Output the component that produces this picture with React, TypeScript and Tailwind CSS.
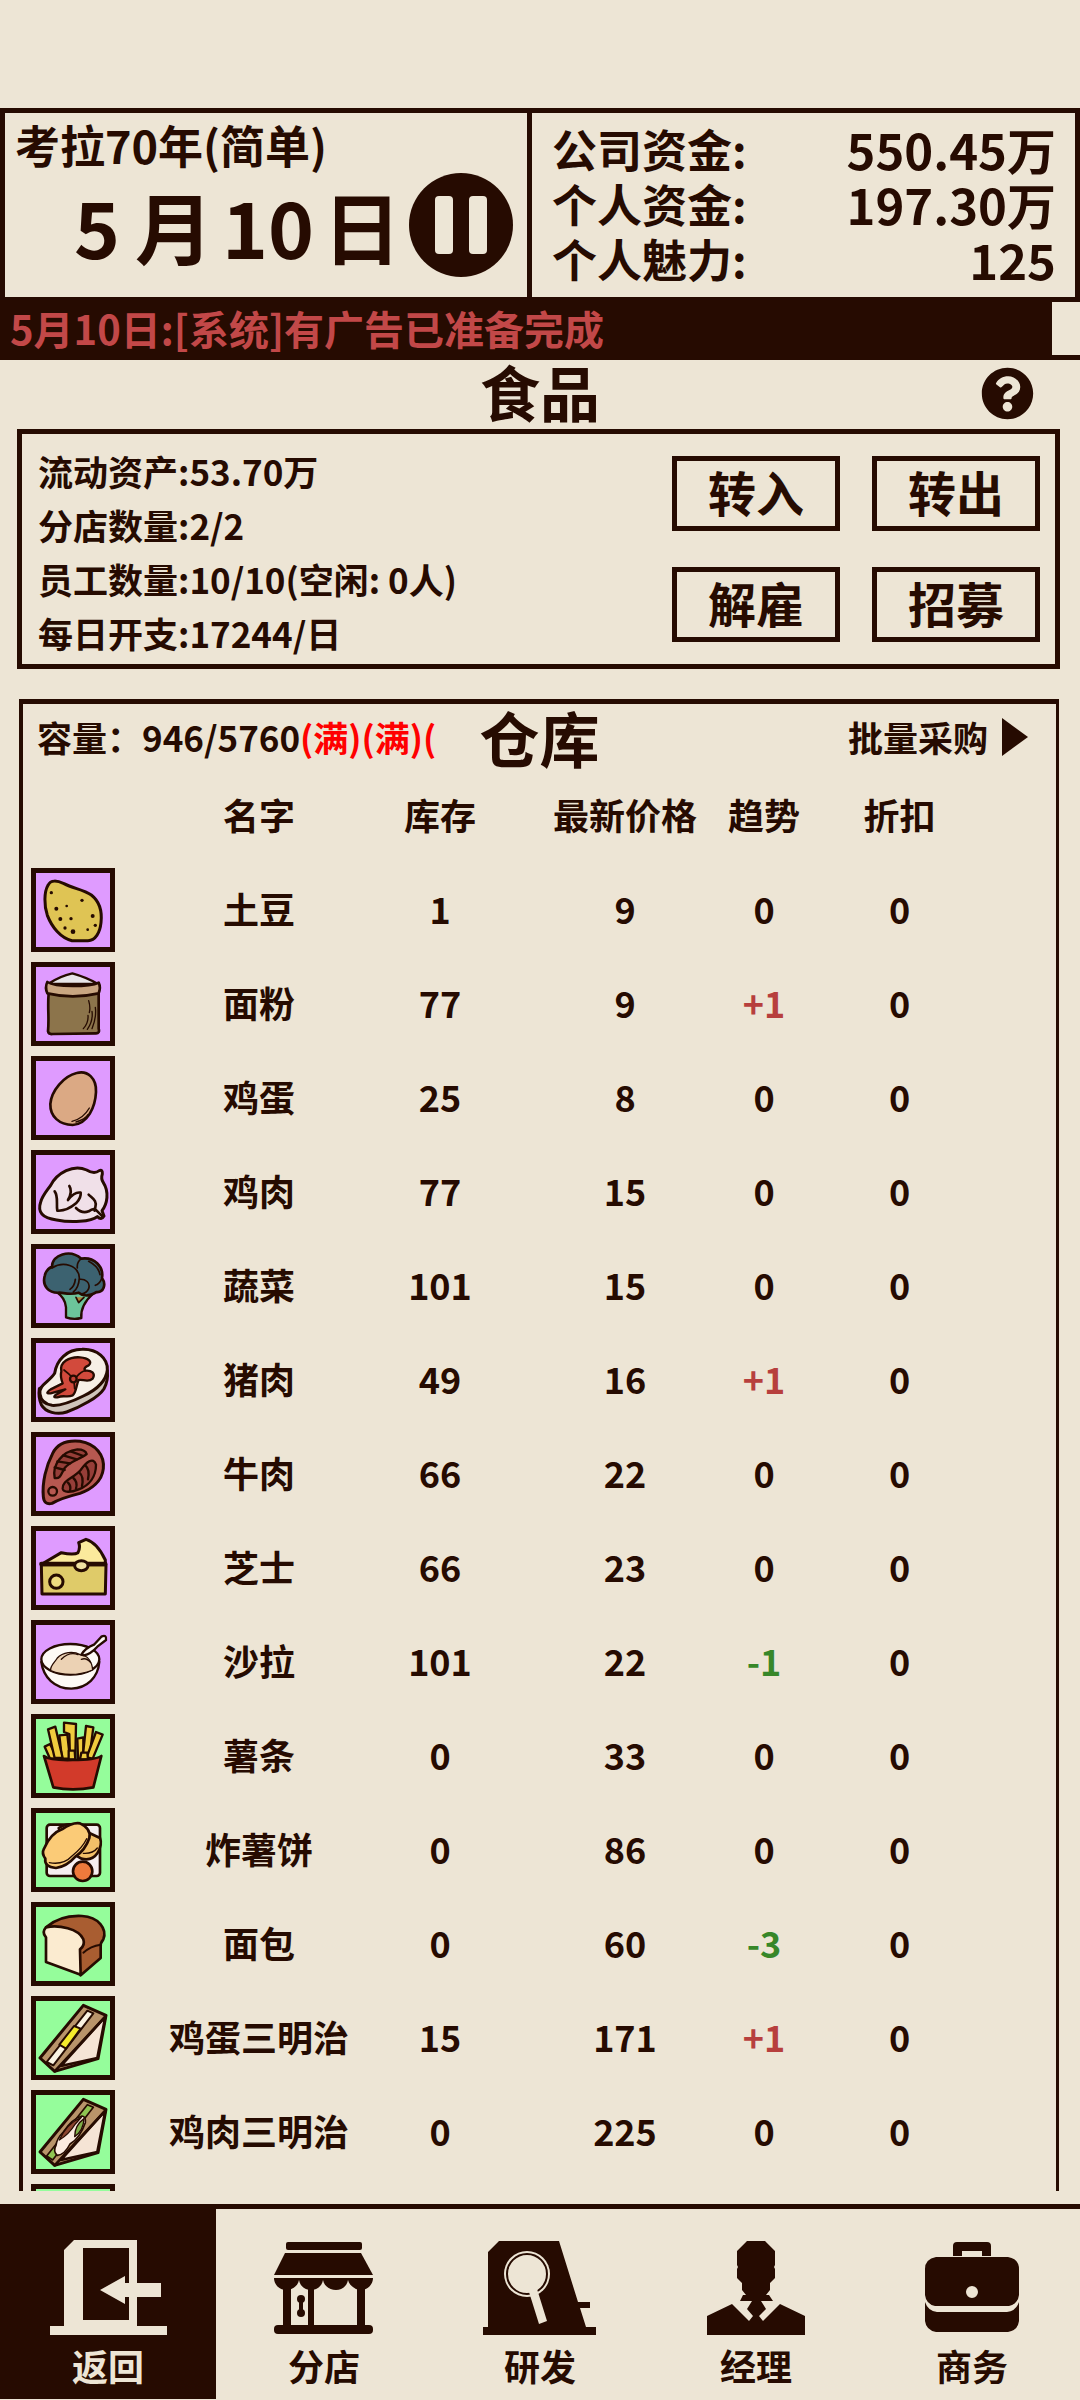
import type { ReactNode } from "react";
import { FaQuestionCircle } from "react-icons/fa";

interface Goods {
  name: string;
  stock?: number;
  price?: number;
  trend?: number;
  discount?: number;
  cooked?: boolean;
  art?: ReactNode;
}

const INK = "#260b01";

const potato = (
  <>
    <path
      d="M84 76C92 58 112 62 132 71C160 86 190 88 214 105C238 124 247 152 243 188C240 218 226 242 204 242L156 242C122 234 96 202 82 166C72 138 72 96 84 76Z"
      fill="#dfc454"
      strokeWidth="9"
    />
    <g fill={INK} stroke="none">
      <circle cx="94" cy="98" r="5" />
      <circle cx="186" cy="121" r="5" />
      <circle cx="140" cy="138" r="4" />
      <circle cx="109" cy="146" r="6" />
      <circle cx="121" cy="177" r="6" />
      <circle cx="153" cy="176" r="5" />
      <circle cx="218" cy="168" r="6" />
      <circle cx="226" cy="196" r="5" />
      <circle cx="135" cy="204" r="5" />
      <circle cx="159" cy="215" r="7" />
      <circle cx="203" cy="209" r="4" />
    </g>
  </>
);

const flour = (
  <>
    <path
      d="M86 118C82 160 88 190 84 232Q86 242 98 240L228 238Q240 238 236 224L236 118Z"
      fill="#8c744b"
      strokeWidth="8"
    />
    <path d="M84 90Q120 66 157 58Q200 70 234 90Z" fill="#e8e6e8" strokeWidth="7" />
    <path
      d="M82 84Q74 100 82 118Q158 136 236 118Q243 100 236 86Q214 96 158 96Q100 96 82 84Z"
      fill="#c9a681"
      strokeWidth="8"
    />
    <path
      d="M190 224Q206 206 204 184M202 226Q220 200 216 172M216 224Q230 190 226 160M206 140Q212 160 208 176"
      fill="none"
      strokeWidth="4"
    />
  </>
);

const egg = (
  <>
    <path
      d="M170 75C204 66 230 92 228 132C226 176 204 228 158 231C118 230 90 206 91 168C94 128 132 84 170 75Z"
      fill="#dba984"
      strokeWidth="8"
    />
    <path d="M156 220Q190 212 208 180M168 222Q196 214 204 200" fill="none" strokeWidth="4" />
  </>
);

const chicken = (
  <>
    <path
      d="M92 130C112 92 160 66 200 84C216 94 230 92 238 86Q248 82 247 96Q242 110 250 122C268 150 262 186 246 206L252 222Q244 236 232 224C214 240 150 242 110 234C66 228 52 210 62 180C68 160 78 150 92 130Z"
      fill="#f0e0e8"
      strokeWidth="9"
    />
    <path
      d="M104 148C116 164 108 186 112 206Q140 208 168 184M148 132C156 144 152 160 144 174Q164 148 182 152Q184 168 168 184M206 158C218 170 232 176 226 196L224 206M168 198Q186 216 206 208Q222 196 230 206L248 224"
      fill="none"
      strokeWidth="8"
    />
  </>
);

const broccoli = (
  <>
    <path
      d="M110 168Q136 186 138 214L138 244Q160 252 184 246Q180 208 222 170Z"
      fill="#6cc49a"
      strokeWidth="7"
    />
    <path
      d="M96 92C96 56 150 38 184 68C222 62 252 92 246 126C260 146 250 170 230 168C210 180 190 182 176 170C150 178 130 170 118 170C86 172 66 150 74 120C78 102 86 96 96 92Z"
      fill="#3c6270"
      strokeWidth="8"
    />
    <path
      d="M96 96C130 74 176 88 178 126Q176 156 160 168M184 68Q170 78 172 96M178 130C196 128 212 140 206 158Q200 172 184 174M206 76Q236 92 240 116M166 130Q164 150 150 160M244 130Q238 144 226 148"
      fill="none"
      strokeWidth="5"
    />
    <path d="M168 184L176 200L192 184" fill="#b0843a" strokeWidth="5" />
  </>
);

const steak = (
  <>
    <path
      d="M58 176C56 190 58 210 64 224C76 246 110 256 140 246C180 232 236 202 252 176C262 158 264 140 262 122L200 100Z"
      fill="#cfc4ba"
      strokeWidth="9"
    />
    <path
      d="M60 192C56 164 88 156 104 130C110 90 140 58 186 58C232 56 264 86 262 120C258 156 224 182 190 198C154 216 124 228 96 226C72 222 62 210 60 192Z"
      fill="#f7efe6"
      strokeWidth="9"
    />
    <path
      d="M124 124C118 96 148 80 180 82C206 84 218 96 206 106C196 110 190 116 196 122C214 120 228 130 218 146C204 160 186 146 176 150C168 166 170 186 158 196C140 204 134 194 112 202Q96 204 108 194L136 178Q112 184 92 190Q72 192 92 178L128 160Q120 140 124 124Z"
      fill="#d24a3c"
      strokeWidth="7"
    />
    <path d="M132 120Q148 132 156 142M170 140Q184 124 196 122M162 154L164 176" fill="none" strokeWidth="5" />
    <circle cx="160" cy="147" r="10" fill="#c44236" strokeWidth="7" />
  </>
);

const beef = (
  <>
    <path
      d="M98 88C112 60 140 48 180 52C228 60 254 94 250 134C246 172 214 196 180 208C148 216 120 224 96 238Q72 244 70 218C66 176 78 126 98 88Z"
      fill="#b75850"
      strokeWidth="9"
    />
    <path
      d="M104 162C96 122 126 82 172 76Q196 76 200 90C180 106 150 112 134 132C124 148 122 166 104 162Z"
      fill="#963e38"
      strokeWidth="7"
    />
    <path
      d="M128 194C126 168 160 164 182 138C198 116 220 96 228 122C228 158 208 184 176 196C152 206 130 206 128 194Z"
      fill="#963e38"
      strokeWidth="7"
    />
    <path
      d="M104 130L134 138M112 112L150 118M130 94L170 106M152 82L190 96M144 176Q154 186 150 200M160 162Q174 174 168 194M178 146Q192 158 186 186M196 124Q210 136 204 166"
      fill="none"
      strokeWidth="7"
    />
    <circle cx="98" cy="202" r="13" fill="#b75850" strokeWidth="7" />
  </>
);

const cheese = (
  <>
    <path
      d="M66 138L124 104Q162 112 174 104Q182 88 176 74L198 64Q232 74 256 126L256 138Z"
      fill="#fbea9c"
      strokeWidth="9"
    />
    <path d="M64 140L258 140L256 228L66 228Z" fill="#dfcb69" strokeWidth="9" />
    <path d="M64 138L256 138" fill="none" strokeWidth="13" />
    <ellipse cx="184" cy="143" rx="20" ry="15" fill="#efe0a0" strokeWidth="9" />
    <circle cx="109" cy="191" r="20" fill="#efdc80" strokeWidth="9" />
  </>
);

const salad = (
  <>
    <path
      d="M64 150C70 196 104 230 154 230C202 228 234 196 238 150Z"
      fill="#fdfaf5"
      strokeWidth="7"
    />
    <ellipse cx="151" cy="142" rx="87" ry="46" fill="#fdfaf5" strokeWidth="7" />
    <path
      d="M92 176C90 160 104 152 112 138C128 120 160 116 180 128C204 130 216 150 218 174Q152 200 92 176Z"
      fill="#ecd2b4"
      strokeWidth="4"
    />
    <path d="M124 142Q148 118 174 128M184 142Q200 136 212 152" fill="none" strokeWidth="4" />
    <path
      d="M184 128Q196 108 222 98L244 74Q260 66 258 84L232 104Q212 126 192 130Z"
      fill="#fdfaf5"
      strokeWidth="7"
    />
  </>
);

const fries = (
  <g transform="translate(0 28)">
    <g fill="#f0cb3e" strokeWidth="7">
      <path d="M74 94L90 86L112 130L90 130Z" />
      <path d="M118 60L142 58L150 130L126 130Z" />
      <path d="M172 70L190 66L190 130L174 130Z" />
      <path d="M84 42L106 34L128 128L104 128Z" />
      <path d="M132 22L168 26L166 130L150 130L148 56L132 50Z" />
      <path d="M198 32L220 36L208 128L188 128Z" />
      <path d="M228 50L248 58L218 130L200 126Z" />
      <path d="M146 106L164 106L166 132L146 132Z" />
      <path d="M184 112L202 112L204 132L180 132Z" />
    </g>
    <path d="M72 122Q90 136 158 134Q226 134 244 122L220 216Q158 228 100 216Z" fill="#d23a2a" strokeWidth="8" />
  </g>
);

const hashBrown = (
  <>
    <rect x="80" y="74" width="160" height="154" rx="10" fill="#f6eef0" strokeWidth="8" />
    <path
      d="M116 84Q150 62 176 84L240 114Q248 134 232 160Q216 184 184 176L140 150Z"
      fill="#f3bf69"
      strokeWidth="8"
    />
    <path
      d="M72 146Q92 100 126 88Q158 66 180 70Q214 86 208 114Q196 150 166 170Q140 200 108 204Q72 200 76 176Q64 160 72 146Z"
      fill="#fbcb77"
      strokeWidth="8"
    />
    <path d="M88 188Q130 196 156 168Q188 142 200 116M190 160Q218 162 232 144" fill="none" strokeWidth="4" />
    <circle cx="188" cy="214" r="29" fill="#ee7a3c" strokeWidth="8" />
  </>
);

const bread = (
  <>
    <path
      d="M78 100C110 72 146 64 186 66C236 68 262 106 250 136Q240 148 242 160L242 192L182 244L150 120Z"
      fill="#a95d31"
      strokeWidth="8"
    />
    <path
      d="M78 100C116 92 176 104 190 136Q196 154 180 166L182 242L78 204L78 130Q64 114 78 100Z"
      fill="#fbebd0"
      strokeWidth="8"
    />
    <path d="M190 176Q212 156 242 152" fill="none" strokeWidth="6" />
  </>
);

const sandwich = (
  <>
    <path d="M190 52L258 82L234 212L104 250L60 210Z" fill="#b9946a" strokeWidth="9" />
    <path d="M256 86L232 210L122 234Z" fill="#f5e4d5" strokeWidth="8" />
    <path d="M256 86L104 250" fill="none" strokeWidth="8" />
  </>
);

const eggSandwich = (
  <>
    {sandwich}
    <path d="M202 68L220 76L100 232L80 222Z" fill="#fbf3e2" strokeWidth="6" />
    <path d="M162 114L182 122L138 182L118 170Z" fill="#f5ea2c" strokeWidth="6" />
  </>
);

const chickenSandwich = (
  <>
    {sandwich}
    <path d="M202 68L220 76L98 234L80 222Z" fill="#8fc552" strokeWidth="5" />
    <path
      d="M186 102Q198 104 196 122Q180 168 150 186Q134 218 112 220Q98 208 108 190Q110 170 130 150Q156 110 186 102Z"
      fill="#fbebe0"
      strokeWidth="5"
    />
    <path d="M184 106Q140 124 118 174Q146 158 166 126Z" fill="#8c4630" strokeWidth="4" />
    <path d="M192 110Q164 130 164 164Q190 146 192 110Z" fill="#7fb04a" strokeWidth="4" />
  </>
);

const goods: Goods[] = [
  { name: "土豆", stock: 1, price: 9, trend: 0, discount: 0, art: potato },
  { name: "面粉", stock: 77, price: 9, trend: 1, discount: 0, art: flour },
  { name: "鸡蛋", stock: 25, price: 8, trend: 0, discount: 0, art: egg },
  { name: "鸡肉", stock: 77, price: 15, trend: 0, discount: 0, art: chicken },
  { name: "蔬菜", stock: 101, price: 15, trend: 0, discount: 0, art: broccoli },
  { name: "猪肉", stock: 49, price: 16, trend: 1, discount: 0, art: steak },
  { name: "牛肉", stock: 66, price: 22, trend: 0, discount: 0, art: beef },
  { name: "芝士", stock: 66, price: 23, trend: 0, discount: 0, art: cheese },
  { name: "沙拉", stock: 101, price: 22, trend: -1, discount: 0, art: salad },
  { name: "薯条", stock: 0, price: 33, trend: 0, discount: 0, cooked: true, art: fries },
  { name: "炸薯饼", stock: 0, price: 86, trend: 0, discount: 0, cooked: true, art: hashBrown },
  { name: "面包", stock: 0, price: 60, trend: -3, discount: 0, cooked: true, art: bread },
  { name: "鸡蛋三明治", stock: 15, price: 171, trend: 1, discount: 0, cooked: true, art: eggSandwich },
  { name: "鸡肉三明治", stock: 0, price: 225, trend: 0, discount: 0, cooked: true, art: chickenSandwich },
  { name: "", cooked: true },
];

const funds = [
  { label: "公司资金:", value: "550.45万" },
  { label: "个人资金:", value: "197.30万" },
  { label: "个人魅力:", value: "125" },
];

const stats = ["流动资产:53.70万", "分店数量:2/2", "员工数量:10/10(空闲: 0人)", "每日开支:17244/日"];

const actions = ["转入", "转出", "解雇", "招募"];

const tabs = [
  {
    label: "返回",
    active: true,
    icon: (
      <>
        <path
          fillRule="evenodd"
          d="M2 87H16V11L26 1H89V87H119V96H2ZM35 9V81H81V9Z"
        />
        <path d="M52 51L77 37V44H113V58H77V65Z" />
      </>
    ),
  },
  {
    label: "分店",
    icon: (
      <>
        <rect x="22" y="3" width="76" height="8" rx="2" />
        <path d="M21 14H97L109 36H10Z" />
        <path d="M10 39H109C109 46 103 51 97 51C91 51 85 46 84 41C83 47 78 51 72 51C66 51 60 47 59 41C58 47 53 51 47 51C41 51 36 47 35 41C34 47 28 51 22 51C16 51 10 46 10 39Z" />
        <path d="M19 45H27V90H19ZM44 45H50V90H44ZM93 45H101V90H93Z" />
        <rect x="10" y="86" width="99" height="9" rx="4" />
        <circle cx="37" cy="60" r="4" />
        <circle cx="37" cy="74" r="4" />
        <rect x="35" y="60" width="4" height="14" />
      </>
    ),
  },
  {
    label: "研发",
    icon: (
      <>
        <path d="M3 88H8V13L19 2H79L98 63H110V69H100L106 88H116V96H3Z" />
        <circle cx="47" cy="35" r="23" fill="#ede5d5" />
        <circle cx="47" cy="35" r="20" fill="none" stroke={INK} strokeWidth="2" />
        <path d="M49 53L57 50L67 82L59 85Z" fill="#ede5d5" />
      </>
    ),
  },
  {
    label: "经理",
    icon: (
      <>
        <path d="M51 2H69L79 12V26L78 28L79 30V39L74 44V51L70 56H73L77 62H65L70 70L63 77L67 82L84 65L109 77V96H11V77L36 65L53 82L57 77L51 70L56 62H44L47 56H50L46 51V44L41 39V30L42 28L41 26V12Z" />
      </>
    ),
  },
  {
    label: "商务",
    icon: (
      <>
        <path d="M41 17V7Q41 3 45 3H75Q79 3 79 7V17H70V12H50V17Z" />
        <path
          fillRule="evenodd"
          d="M24 18H96Q107 20 107 30V56Q106 65 97 67H23Q14 65 13 56V30Q13 20 24 18ZM60 47A6 6 0 1 0 60 59A6 6 0 1 0 60 47Z"
        />
        <path d="M13 63Q16 72 25 73H95Q104 72 107 63V82Q106 91 96 93H24Q14 91 13 82Z" />
      </>
    ),
  },
];

function Trend({ value }: { value: number }) {
  if (value > 0) return <span className="text-[#b73f3d]">+{value}</span>;
  if (value < 0) return <span className="text-[#378729]">{value}</span>;
  return <span>0</span>;
}

function GoodsRow({ name, stock, price, trend, discount, cooked, art }: Goods) {
  return (
    <tr className="h-[94px]">
      <td className="pl-2">
        <div
          className={`h-[84px] w-[84px] border-[5px] border-[#260b01] ${
            cooked ? "bg-[#95fd9b]" : "bg-[#df9bff]"
          }`}
        >
          <svg
            viewBox="48 39 222 222"
            className="h-full w-full"
            stroke={INK}
            strokeLinejoin="round"
            strokeLinecap="round"
          >
            {art}
          </svg>
        </div>
      </td>
      <td className="pb-1">{name}</td>
      <td className="pb-1">{stock}</td>
      <td className="pb-1">{price}</td>
      <td className="pb-1">{trend !== undefined && <Trend value={trend} />}</td>
      <td className="pb-1">{discount}</td>
      <td />
    </tr>
  );
}

function Header() {
  return (
    <header className="grid grid-cols-[532fr_548fr]">
      <div className="border-[5px] border-[#260b01] pt-1 pb-5">
        <p className="pl-2.5 text-[45px] leading-[56px]">考拉70年(简单)</p>
        <div className="flex items-center justify-end gap-2 pr-3.5">
          <p className="flex text-center text-[78px] leading-[96px]">
            <span className="w-[76px]">5</span>
            <span>月</span>
            <span className="w-[110px]">10</span>
            <span>日</span>
          </p>
          <button
            type="button"
            aria-label="暂停"
            className="flex h-[104px] w-[104px] items-center justify-center gap-4 rounded-full bg-[#260b01]"
          >
            <span className="h-[58px] w-[18px] rounded-sm bg-[#ede6d6]" />
            <span className="h-[58px] w-[18px] rounded-sm bg-[#ede6d6]" />
          </button>
        </div>
      </div>
      <dl className="border-y-[5px] border-r-[5px] border-[#260b01] py-2 pr-[19px] pl-5">
        {funds.map((fund) => (
          <div key={fund.label} className="flex items-center justify-between leading-[55px]">
            <dt className="text-[45px]">{fund.label}</dt>
            <dd className="text-[49px]">{fund.value}</dd>
          </div>
        ))}
      </dl>
    </header>
  );
}

export default function App() {
  return (
    <div className="flex h-screen flex-col bg-[#ede5d5] pt-[108px] font-['Noto_Sans_CJK_SC',sans-serif] font-bold whitespace-nowrap text-[#260b01]">
      <Header />
      <div className="border-b-[5px] border-[#260b01]">
        <p className="mr-7 bg-[#260b01] pl-2.5 text-[40px] leading-[53px] text-[#c24848]">
          5月10日:[系统]有广告已准备完成
        </p>
      </div>

      <div className="grid grid-cols-[1fr_auto_1fr] items-center pb-[7px]">
        <h1 className="col-start-2 text-[60px] leading-[62px]">食品</h1>
        <button type="button" aria-label="帮助" className="mr-[46px] justify-self-end pt-1">
          <FaQuestionCircle className="h-[53px] w-[53px]" />
        </button>
      </div>

      <section className="mr-5 ml-[17px] flex justify-between border-[5px] border-[#260b01] pr-[15px] pl-4">
        <div className="pt-2.5 text-[35px] leading-[54px]">
          {stats.map((line) => (
            <p key={line}>{line}</p>
          ))}
        </div>
        <div className="grid grid-cols-2 gap-x-8 gap-y-9 py-[22px]">
          {actions.map((action) => (
            <button
              key={action}
              type="button"
              className="h-[75px] w-[168px] border-[5px] border-[#260b01] pb-1.5 text-[48px] leading-[56px]"
            >
              {action}
            </button>
          ))}
        </div>
      </section>

      <section className="mt-[30px] mr-[21px] mb-[13px] ml-[19px] flex min-h-0 flex-1 flex-col border-t-[5px] border-r-[3px] border-l-4 border-[#260b01]">
        <div className="grid h-[66px] shrink-0 grid-cols-[1fr_auto_1fr] items-center px-3.5 text-[35px]">
          <p>
            容量：946/5760<span className="text-[#ff0000]">(满)(满)(</span>
          </p>
          <h2 className="text-[60px] leading-[66px]">仓库</h2>
          <button type="button" className="mr-3.5 flex items-center gap-3.5 justify-self-end">
            批量采购
            <svg viewBox="0 0 26 38" className="h-[38px] w-[26px]" fill="currentColor">
              <path d="M0 0L26 19L0 38Z" />
            </svg>
          </button>
        </div>
        <div className="min-h-0 flex-1 overflow-hidden">
          <table className="w-full table-fixed text-center text-[36px] leading-[54px]">
            <colgroup>
              <col className="w-[145px]" />
              <col className="w-[182px]" />
              <col className="w-[180px]" />
              <col className="w-[190px]" />
              <col className="w-[88px]" />
              <col className="w-[183px]" />
              <col className="w-[65px]" />
            </colgroup>
            <thead>
              <tr className="h-[93px]">
                <th />
                <th className="pb-1.5">名字</th>
                <th className="pb-1.5">库存</th>
                <th className="pb-1.5">最新价格</th>
                <th className="pb-1.5">趋势</th>
                <th className="pb-1.5">折扣</th>
                <th />
              </tr>
            </thead>
            <tbody>
              {goods.map((item) => (
                <GoodsRow key={item.name} {...item} />
              ))}
            </tbody>
          </table>
        </div>
      </section>

      <nav className="mb-px grid grid-cols-5 border-t-[5px] border-[#260b01]">
        {tabs.map((tab) => (
          <button
            key={tab.label}
            type="button"
            className={`flex flex-col items-center gap-1.5 pt-[30px] pb-2.5 text-[36px] leading-[48px] ${
              tab.active ? "bg-[#260b01] text-[#ede5d5]" : ""
            }`}
          >
            <svg viewBox="0 0 120 96" className="h-24 w-[120px]" fill="currentColor">
              {tab.icon}
            </svg>
            {tab.label}
          </button>
        ))}
      </nav>
    </div>
  );
}
